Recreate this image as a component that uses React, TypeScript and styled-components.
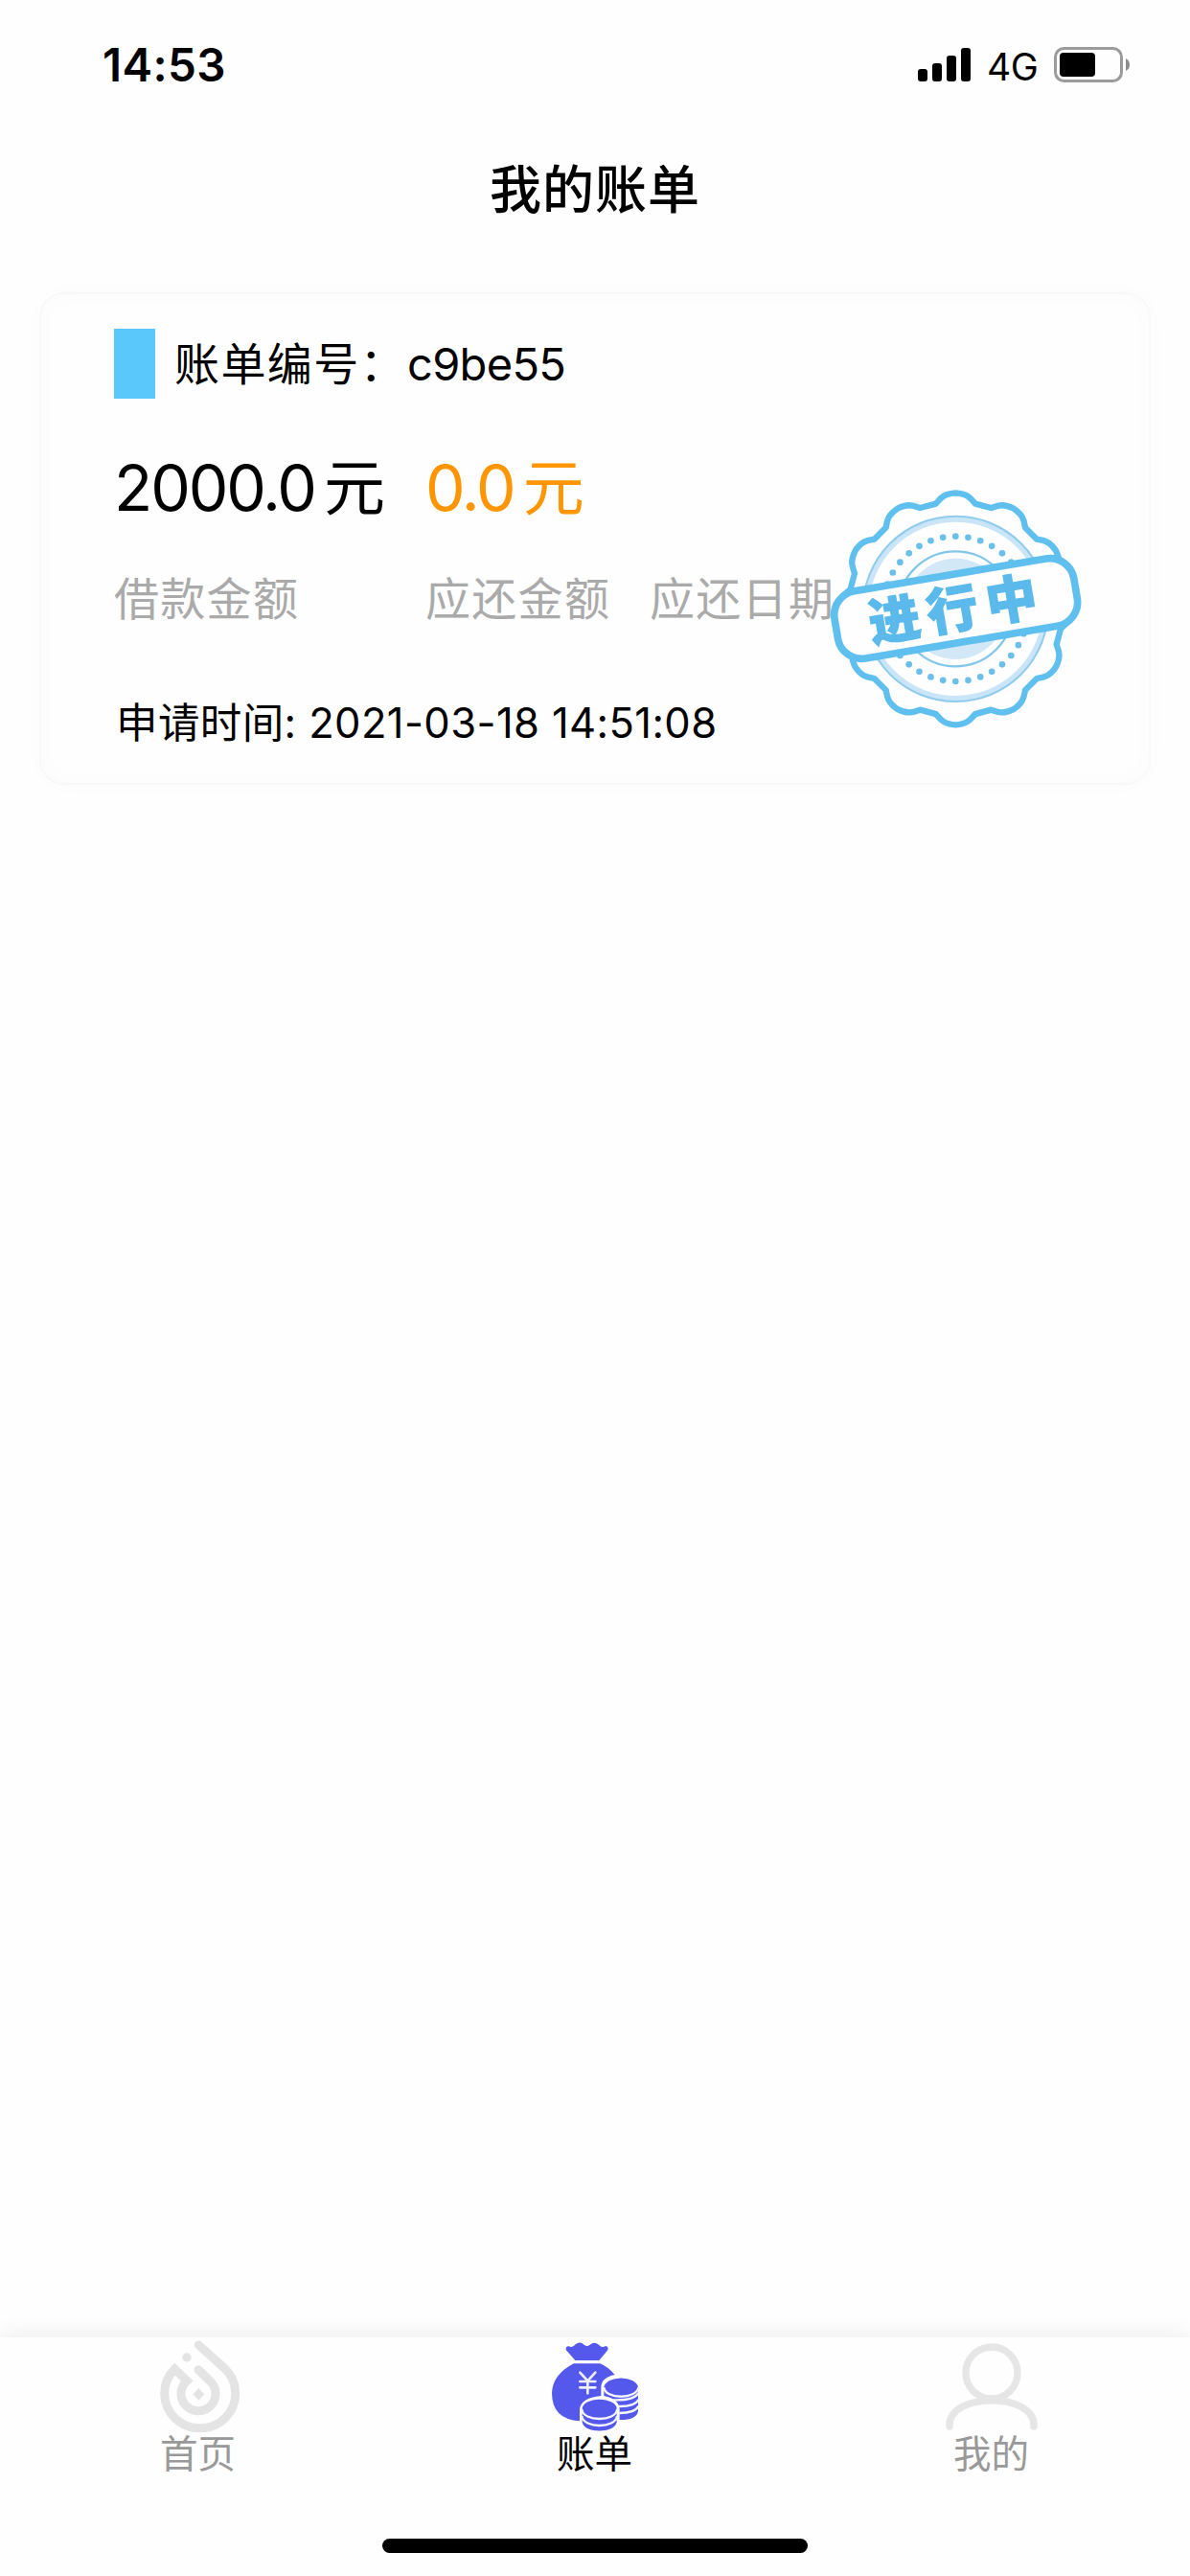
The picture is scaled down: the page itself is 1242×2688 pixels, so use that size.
import React from "react";
import styled, { createGlobalStyle } from "styled-components";

const GlobalStyle = createGlobalStyle`
  * { box-sizing: border-box; }
  body {
    margin: 0;
    background: #fefefe;
    color: #000;
    font-family: Inter, "Noto Sans CJK SC", sans-serif;
  }
`;

const Screen = styled.div`
  width: 1242px;
  height: 2688px;
  display: flex;
  flex-direction: column;
  overflow: hidden;
`;

const StatusBar = styled.header`
  height: 136px;
  padding: 0 62px 0 107px;
  display: flex;
  justify-content: space-between;
`;

const Clock = styled.span`
  height: 136px;
  line-height: 136px;
  font-size: 47.5px;
  font-weight: 600;
  letter-spacing: 0.4px;
`;

const StatusIcons = styled.div`
  height: 136px;
  display: flex;
  align-items: center;
`;

const Network = styled.span`
  width: 70px;
  padding-left: 16px;
  line-height: 136px;
  font-size: 39px;
  letter-spacing: -0.5px;
  padding-top: 3px;
`;

const BatteryIcon = styled.svg`
  margin-left: 16px;
`;

const Title = styled.h1`
  margin: 0;
  height: 126px;
  line-height: 126px;
  text-align: center;
  font-size: 54px;
  font-weight: 500;
  letter-spacing: 1px;
`;

const Card = styled.section`
  position: relative;
  margin: 43px 41px 0;
  height: 514px;
  padding: 36px 76px 0;
  border: 2px solid #f8f8f8;
  border-radius: 26px;
  box-shadow: 0 0 26px rgba(0, 0, 0, 0.015), inset 0 0 26px rgba(0, 0, 0, 0.015);
`;

const BillHeader = styled.div`
  display: flex;
  align-items: center;
  height: 73px;
  gap: 20px;
`;

const Marker = styled.i`
  width: 43px;
  height: 73px;
  background: #5ac8fa;
`;

const BillNumber = styled.span`
  display: flex;
  font-size: 47px;
  line-height: 73px;
  letter-spacing: -0.7px;
`;

const BillCaption = styled.span`
  width: 243px;
  letter-spacing: 1.4px;
`;

const Figures = styled.div`
  display: grid;
  grid-template-columns: 325px 234px 240px;
  grid-template-rows: 112px 120px;
  align-items: center;
  margin-top: 37px;
`;

const Amount = styled.div<{ $tone?: string }>`
  display: flex;
  gap: 9px;
  font-size: 66px;
  line-height: 100px;
  letter-spacing: -2.1px;
  color: ${(p) => p.$tone ?? "#000"};
`;

const Unit = styled.span`
  font-size: 64px;
`;

const FigureLabel = styled.span`
  font-size: 47px;
  line-height: 70px;
  letter-spacing: 1.3px;
  color: #aaa;
  white-space: nowrap;
`;

const AppliedAt = styled.p`
  margin: 34px 0 0 2px;
  font-size: 43.5px;
  line-height: 70px;
  letter-spacing: 0.4px;
`;

const Stamp = styled.svg`
  position: absolute;
  left: 817px;
  top: 197px;
`;

const StampText = styled.text`
  font-family: "Noto Sans CJK SC", sans-serif;
  font-weight: 900;
  font-size: 160px;
`;

const TabBar = styled.nav`
  margin-top: auto;
  height: 249px;
  display: grid;
  grid-template-columns: repeat(3, 1fr);
  grid-template-rows: 210px 15px;
  background: #fefefe;
  box-shadow: 0 0 24px rgba(0, 0, 0, 0.09);
`;

const Tab = styled.div<{ $active?: boolean }>`
  display: flex;
  flex-direction: column;
  align-items: center;
  padding: 3px 1px 0 0;
  font-size: 39.5px;
  line-height: 46px;
  color: ${(p) => (p.$active ? "#000" : "#999")};
`;

const HomeIndicator = styled.div`
  grid-column: 1 / -1;
  justify-self: center;
  width: 444px;
  height: 15px;
  border-radius: 8px;
  background: #000;
`;

const SignalIcon = () => (
  <svg width="56" height="36" viewBox="0 0 56 36">
    <rect x="0" y="22" width="10" height="13" rx="3" />
    <rect x="15" y="16" width="10" height="19" rx="3" />
    <rect x="30" y="8" width="10" height="27" rx="3" />
    <rect x="45" y="0" width="10" height="35" rx="3" />
  </svg>
);

const Battery = () => (
  <BatteryIcon width="80" height="38" viewBox="0 0 80 38">
    <rect x="1.5" y="1.5" width="69" height="34" rx="9" fill="none" stroke="#9b9b9b" strokeWidth="3" />
    <rect x="6" y="6" width="37" height="25" rx="4" />
    <path d="M75 12 Q79 14 79 18.500 Q79 23 75 25Z" fill="#8c8c8c" />
  </BatteryIcon>
);

const CX = 472;
const CY = 434;

const polar = (radius: number, degrees: number) => {
  const a = (degrees * Math.PI) / 180;
  return `${(CX + radius * Math.sin(a)).toFixed(1)} ${(CY - radius * Math.cos(a)).toFixed(1)}`;
};

const scallops = Array.from({ length: 12 }, (_, i) => {
  const c = i * 30;
  return `${i ? "L" : "M"}${polar(335, c - 10.6)} C${polar(348, c - 8)} ${polar(363, c - 6)} ${polar(363, c)} C${polar(363, c + 6)} ${polar(348, c + 8)} ${polar(335, c + 10.6)}`;
}).join(" ") + "Z";

const ProgressStamp = () => (
  <Stamp width="276.67" height="260" viewBox="60 40 830 780" fill="none" stroke="#5fbfee">
    <path d={scallops} strokeWidth="19" strokeLinejoin="round" />
    <circle cx={CX} cy={CY} r="280" stroke="#c9e5f7" strokeWidth="16" />
    <circle cx={CX} cy={CY} r="290" stroke="#8fcbec" strokeWidth="6" />
    {Array.from({ length: 36 }, (_, i) => {
      const [x, y] = polar(227, i * 10).split(" ");
      return <circle key={i} cx={x} cy={y} r="10" fill="#6bbfe8" stroke="none" />;
    })}
    <circle cx={CX} cy={CY} r="180" stroke="#83c6ea" strokeWidth="7" />
    <circle cx={CX} cy={CY} r="158" fill="#d3e8f7" stroke="none" />
    <g transform="rotate(-9.6 473 433)">
      <rect x="93" y="326" width="760" height="214" rx="76" fill="#fefefe" strokeWidth="23" />
      <g fill="#5bb9eb" stroke="#5bb9eb" strokeWidth="4" textAnchor="middle">
        <StampText x="277" y="493">进</StampText>
        <StampText x="461" y="493">行</StampText>
        <StampText x="649" y="493">中</StampText>
      </g>
    </g>
  </Stamp>
);

const FlameIcon = () => (
  <svg width="96" height="96" viewBox="176 94 288 288" fill="none" stroke="#e4e4e4" strokeWidth="27" strokeLinecap="round">
    <path d="M321 109 L400 180 A111 109 0 1 1 246 184 L284 221 A54 54 0 1 0 360 225 L320 186" strokeLinejoin="miter" />
    <circle cx="284" cy="148" r="14" fill="#e4e4e4" stroke="none" />
    <path d="M321 244 L339 263 L321 282 L303 263Z" fill="#e4e4e4" stroke="none" />
  </svg>
);

const BillIcon = () => (
  <svg width="96" height="96" viewBox="159 94 288 288" fill="#5459ec">
    <path d="M241 157 L212 124 Q211 112 221 113 Q233 119 242 107 Q256 96 269 108 Q278 116 287 108 Q301 97 315 108 Q324 119 336 112 Q346 113 343 125 L316 157Z" />
    <path d="M236 167 H319 Q345 178 365 202 Q323 211 322 240 V268 Q257 274 255 312 V347 Q168 341 168 259 Q170 202 236 167Z" />
    <g fill="none" stroke="#eeeeff" strokeWidth="8" strokeLinecap="round">
      <path d="M256 195 L280 221 L304 195 M280 221 V260 M256 223 H304 M256 242 H304" />
    </g>
    <path d="M331 240 A54 32 0 0 1 438 240 V315 C436 336 410 344 380 343 V309 Q378 278 331 268Z" />
    <path d="M263 309 A54 30 0 0 1 371 309 V350 C366 387 267 387 263 350Z" />
    <g fill="none" stroke="#f6f6ff" strokeWidth="7">
      <path d="M331 241 C333 280 435 280 439 241 M358 281 Q423 284 440 259 M376 301 Q428 302 440 279 M379 322 Q428 322 440 300" />
      <path d="M262 310 C264 350 370 350 372 310 M262 331 C266 371 368 371 372 331" />
    </g>
  </svg>
);

const ProfileIcon = () => (
  <svg width="96" height="96" viewBox="171 94 288 288" fill="none" stroke="#e6e6e6" strokeWidth="22" strokeLinecap="round">
    <circle cx="315" cy="196" r="81" />
    <path d="M183 364 C176 255 454 255 447 364" />
  </svg>
);

export default function App() {
  return (
    <Screen>
      <GlobalStyle />
      <StatusBar>
        <Clock>14:53</Clock>
        <StatusIcons>
          <SignalIcon />
          <Network>4G</Network>
          <Battery />
        </StatusIcons>
      </StatusBar>
      <Title>我的账单</Title>
      <Card>
        <BillHeader>
          <Marker />
          <BillNumber>
            <BillCaption>账单编号：</BillCaption>
            <span>c9be55</span>
          </BillNumber>
        </BillHeader>
        <Figures>
          <Amount>2000.0<Unit>元</Unit></Amount>
          <Amount $tone="#ff9500">0.0<Unit>元</Unit></Amount>
          <span />
          <FigureLabel>借款金额</FigureLabel>
          <FigureLabel>应还金额</FigureLabel>
          <FigureLabel>应还日期</FigureLabel>
        </Figures>
        <AppliedAt>申请时间: 2021-03-18 14:51:08</AppliedAt>
        <ProgressStamp />
      </Card>
      <TabBar>
        <Tab><FlameIcon />首页</Tab>
        <Tab $active><BillIcon />账单</Tab>
        <Tab><ProfileIcon />我的</Tab>
        <HomeIndicator />
      </TabBar>
    </Screen>
  );
}
